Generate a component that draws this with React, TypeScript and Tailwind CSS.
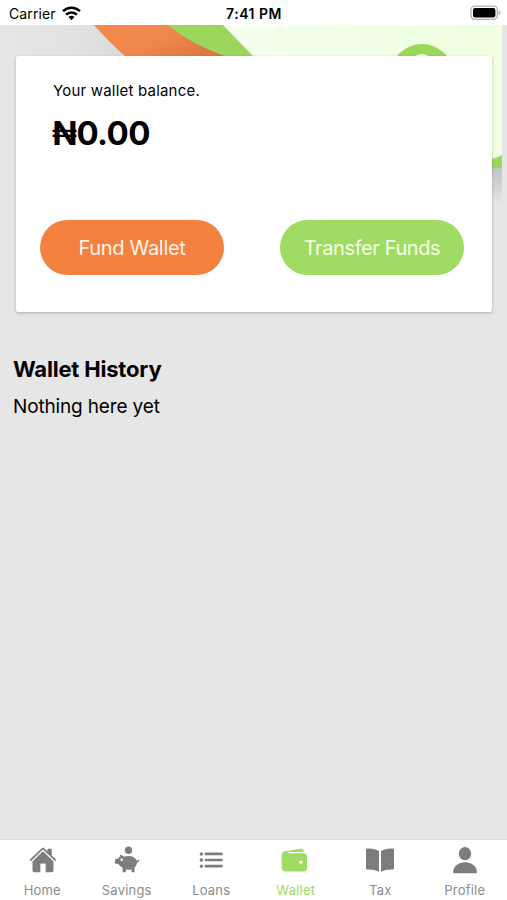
import type { ReactNode } from 'react';
import { IoHome, IoList, IoWallet } from 'react-icons/io5';

function WifiIcon() {
  return (
    <svg width="19" height="15" viewBox="0 0 19 15" fill="none" stroke="#000" strokeWidth="2.5">
      <path d="M1 5.2a12.2 12.2 0 0 1 17 0" />
      <path d="M4.1 8.6a7.8 7.8 0 0 1 10.8 0" />
      <path d="M9.5 14.2 6.5 11.1a4.3 4.3 0 0 1 6 0Z" fill="#000" stroke="none" />
    </svg>
  );
}

function BatteryIcon() {
  return (
    <svg width="31" height="16" viewBox="0 0 31 16">
      <rect x="1" y="1.2" width="26.4" height="13.2" rx="3.8" fill="#fff" stroke="#b0b0b0" strokeWidth="1.3" />
      <rect x="3" y="3.1" width="22.4" height="9.4" rx="2" fill="#000" />
      <path d="M28.7 5.4q1.8.8 1.8 2.4t-1.8 2.4z" fill="#b0b0b0" />
    </svg>
  );
}

function PiggyIcon() {
  return (
    <svg width="26" height="28" viewBox="0 0 26 28" fill="currentColor">
      <circle cx="14.5" cy="4.2" r="3.7" />
      <path d="M6 8.7c1.7.2 3 .9 3.9 2 1.3-.6 2.8-.8 4.6-.8 4 0 7.1 1.7 8.3 4.6.9.5 1.4.2 1.6-.9l1 .3c-.1 1.6-1 2.4-2.3 2.4-.1 2.3-1.1 4-2.6 5.1v4.9h-2.9v-2.9c-1.8.4-4.1.4-5.8 0v2.9H8.6v-4.6C7 20.9 5.7 19.9 4.9 18.5l-4-1.2v-3.7l3.2-1c.5-.9 1.1-1.5 2-2z" />
      <circle cx="7.6" cy="13.8" r="1.2" fill="#fff" />
    </svg>
  );
}

function BookIcon() {
  return (
    <svg width="28" height="28" viewBox="0 0 28 28" fill="currentColor">
      <path d="M0 3.6Q0 2.6 1 2.5 8.5 2 13 5.1V25.8Q8.4 23.2 1 23.5 0 23.5 0 22.5Z" />
      <path d="M28 3.6Q28 2.6 27 2.5 19.5 2 15 5.1V25.8Q19.6 23.2 27 23.5 28 23.5 28 22.5Z" />
    </svg>
  );
}

function PersonIcon() {
  return (
    <svg width="28" height="28" viewBox="0 0 28 28" fill="currentColor">
      <ellipse cx="14" cy="7.7" rx="6.2" ry="6.6" />
      <path d="M3.2 27.3Q2 27.3 2 26C2.4 20 7.5 16.2 14 16.2S25.6 20 26 26Q26 27.3 24.8 27.3Z" />
    </svg>
  );
}

function HeaderArt() {
  return (
    <svg className="absolute left-0 top-0" width="507" height="185" viewBox="0 25 507 185">
      <defs>
        <linearGradient id="shade" x1="0" x2="1">
          <stop offset="0" stopColor="#e6e6e6" />
          <stop offset="0.55" stopColor="#e2e2e2" />
          <stop offset="1" stopColor="#dadada" />
        </linearGradient>
        <linearGradient id="orange" x1="0" x2="1" y1="0" y2="0.5">
          <stop offset="0" stopColor="#f38a4d" />
          <stop offset="0.6" stopColor="#ef864b" />
          <stop offset="1" stopColor="#dc7844" />
        </linearGradient>
        <linearGradient id="mint" x1="0" x2="1">
          <stop offset="0" stopColor="#f5ffef" />
          <stop offset="1" stopColor="#efffdf" />
        </linearGradient>
        <linearGradient id="fade" x1="0" x2="0" y1="0" y2="1">
          <stop offset="0" stopColor="#c2c2c2" />
          <stop offset="1" stopColor="#e6e6e6" />
        </linearGradient>
      </defs>
      <path d="M0 25h94q16 18 32 32H0z" fill="url(#shade)" />
      <path d="M94 25h76l62 32H126q-16-14-32-32z" fill="url(#orange)" />
      <path d="M168 25h56l32 32h-28q-36-12-60-32z" fill="#9bd75c" />
      <path d="M223 25h279v132l-10 3V80L254 57z" fill="url(#mint)" />
      <circle cx="422" cy="76" r="32" fill="#9bd75c" />
      <circle cx="422" cy="66" r="12" fill="#efffdf" />
      <path d="M485 168v-8q10-1 17-5v13z" fill="#9bd75c" />
      <path d="M485 168h17v37h-17z" fill="url(#fade)" />
    </svg>
  );
}

type TabProps = {
  label: string;
  icon: ReactNode;
  active?: boolean;
};

function Tab({ label, icon, active }: TabProps) {
  return (
    <button
      className={`flex flex-1 flex-col items-center pt-1 ${active ? 'text-[#a0dc63]' : 'text-[#7d7d7d]'}`}
    >
      <span className="flex h-8 items-center justify-center">{icon}</span>
      <span
        className={`mt-[5px] text-[13px] leading-[18px] tracking-[0.2px] ${active ? '' : 'text-[#8c8c8c]'}`}
      >
        {label}
      </span>
    </button>
  );
}

export default function App() {
  return (
    <div className="flex h-[900px] w-[507px] flex-col overflow-hidden bg-[#e6e6e6] font-['Inter',sans-serif] text-black">
      <header className="grid h-[25px] shrink-0 grid-cols-3 items-center bg-white pl-[9px] pr-[6px] text-[14px]">
        <div className="flex items-center gap-[6px] pt-px tracking-[0.1px]">
          Carrier
          <WifiIcon />
        </div>
        <div className="pr-[2px] pt-px text-center font-semibold tracking-[0.5px]">7:41 PM</div>
        <div className="flex justify-end pt-px">
          <BatteryIcon />
        </div>
      </header>

      <main className="relative flex-1">
        <HeaderArt />
        <section className="relative ml-4 mt-[31px] h-[256px] w-[476px] rounded-[2px] bg-white pl-6 pt-[25px] shadow-[0_1px_3px_rgba(0,0,0,0.25)]">
          <p className="pl-[13px] text-[15px] leading-5 tracking-[0.2px]">Your wallet balance.</p>
          <p className="mt-[11px] pl-3 text-[33px] font-bold leading-[42px] tracking-[-0.6px]">₦0.00</p>
          <div className="mt-[66px] flex gap-14">
            <button className="h-[55px] w-[184px] rounded-full bg-[#f48140] pt-px text-[20px] tracking-[-0.3px] text-[#fff3e8]">
              Fund Wallet
            </button>
            <button className="h-[55px] w-[184px] rounded-full bg-[#a0dc63] pt-px text-[20px] tracking-[-0.4px] text-[#f6ffe9]">
              Transfer Funds
            </button>
          </div>
        </section>

        <section className="relative mt-[43px] pl-[13px]">
          <h2 className="text-[22px] font-bold leading-7 tracking-[-0.2px]">Wallet History</h2>
          <p className="mt-3 text-[19px] leading-6 tracking-[-0.15px]">Nothing here yet</p>
        </section>
      </main>

      <nav className="flex h-[61px] shrink-0 border-t border-[#dcdcdc] bg-white">
        <Tab label="Home" icon={<IoHome size={28} className="ml-[2px]" />} />
        <Tab label="Savings" icon={<PiggyIcon />} />
        <Tab label="Loans" icon={<IoList size={28} />} />
        <Tab label="Wallet" icon={<IoWallet size={29} className="mr-[3px]" />} active />
        <Tab label="Tax" icon={<BookIcon />} />
        <Tab label="Profile" icon={<PersonIcon />} />
      </nav>
    </div>
  );
}
